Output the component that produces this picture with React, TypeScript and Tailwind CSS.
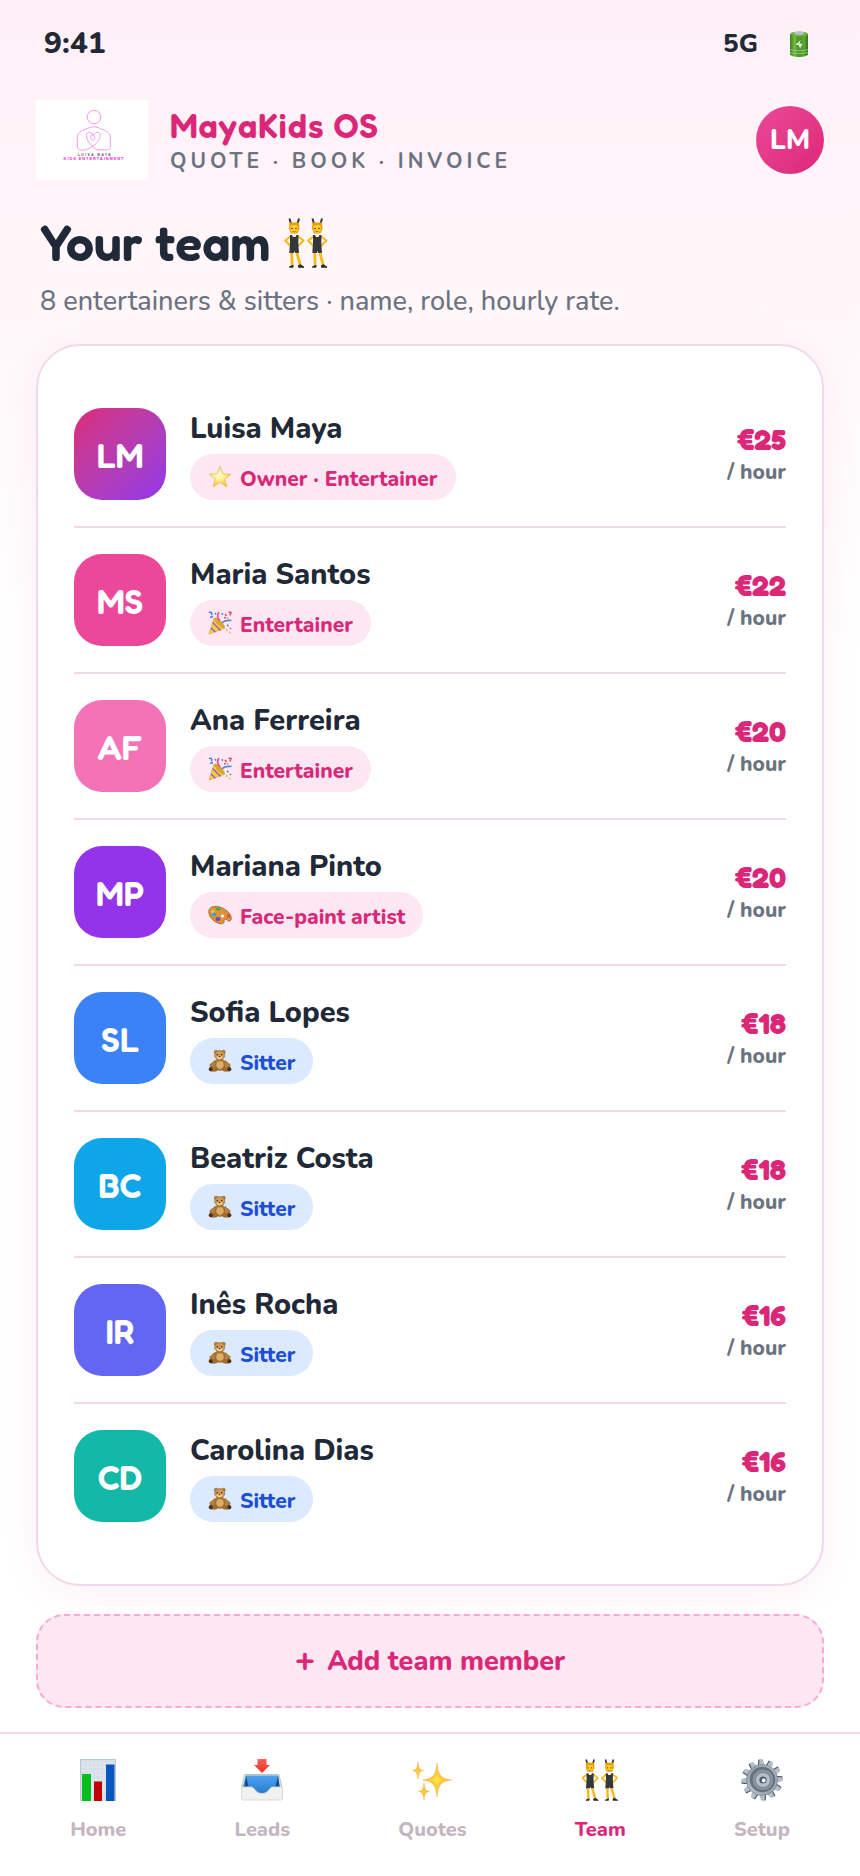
import type { ReactNode } from "react";

type IconProps = { className?: string };

function Battery({ className }: IconProps) {
  return (
    <svg viewBox="0 0 18 26" className={className} aria-hidden="true">
      <defs>
        <linearGradient id="bat" x1="0" x2="1">
          <stop offset="0" stopColor="#3f7d1c" />
          <stop offset=".25" stopColor="#74b844" />
          <stop offset=".45" stopColor="#4c9426" />
          <stop offset=".8" stopColor="#5aa52f" />
          <stop offset="1" stopColor="#35701a" />
        </linearGradient>
      </defs>
      <path d="M0 3v20c0 4 18 4 18 0V3z" fill="url(#bat)" />
      <ellipse cx="9" cy="3" rx="9" ry="2.6" fill="#6cb33f" />
      <ellipse cx="9" cy="2.2" rx="5" ry="1.6" fill="#b9c3cf" />
      <path d="M0 18.500c3 1.500 15 1.500 18 0M0 21.300c3 1.500 15 1.500 18 0" stroke="#a5cf8a" strokeWidth=".8" fill="none" />
      <path d="M10.500 9L5.500 14h3.200l1.300 3.500 2.600-4.700H9.500z" fill="#dcefd0" />
    </svg>
  );
}

function Dancer() {
  return (
    <g>
      <path d="M7 6L5.500.5M13.500 6L15 .5" stroke="#33373d" strokeWidth="2" fill="none" />
      <path d="M5.500 4.500h9.500l.5 6-2 5h-6.500l-2-5z" fill="#e79e00" />
      <path d="M6.300 8.500c2-2 6-2 7.700 0l-.5 4.500-3.300 3-3.400-3z" fill="#ffcf2e" />
      <circle cx="8" cy="10.500" r=".8" fill="#4a3510" />
      <circle cx="12" cy="10.500" r=".8" fill="#4a3510" />
      <path d="M8.500 13.200c1 .7 2 .7 3 0" stroke="#c4372d" strokeWidth=".9" fill="none" />
      <path d="M6.500 18.500L1.200 22.500l5.300 5.500M14 18.500l5.500 4L14 28" stroke="#f7b916" strokeWidth="2.100" fill="none" strokeLinejoin="round" />
      <path d="M6 17h2l1 2h2.500l1-2h2l-.2 8.500.7 9.500h-3.700l-.8-2-.7 2H5.300l.7-9.500z" fill="#34383d" />
      <path d="M7.700 35l.5 12.500M12.800 35l3.500 12" stroke="#f9b812" strokeWidth="2.800" fill="none" />
      <path d="M5.500 48.800l3.500-1.500v1.900H5.500zM14.500 47.500l2-.8 3.500 2.500h-5.500z" fill="#2e2a28" stroke="#2e2a28" />
    </g>
  );
}

function Dancers({ className }: IconProps) {
  return (
    <svg viewBox="0 0 44 50" className={className} aria-hidden="true">
      <Dancer />
      <g transform="translate(23 0)"><Dancer /></g>
    </svg>
  );
}

function Star({ className }: IconProps) {
  return (
    <svg viewBox="0 0 24 24" className={className} aria-hidden="true">
      <defs>
        <radialGradient id="star" cx=".45" cy=".4" r=".6">
          <stop offset="0" stopColor="#fffbe0" />
          <stop offset=".5" stopColor="#ffec85" />
          <stop offset="1" stopColor="#f7bd2f" />
        </radialGradient>
      </defs>
      <path d="M12 1.500l2.900 7.300 8 .4-6.200 4.900 2.200 7.700L12 17.400l-6.900 4.400 2.200-7.700L1.100 9.200l8-.4z" fill="url(#star)" stroke="#e9b54a" strokeWidth=".7" strokeLinejoin="round" />
    </svg>
  );
}

function Party({ className }: IconProps) {
  return (
    <svg viewBox="0 0 24 24" className={className} aria-hidden="true">
      <path d="M1 23L6 7l11 10z" fill="#f6cb45" stroke="#d59f32" strokeWidth=".6" />
      <path d="M4.600 11.500l8 8M3 17l4.500 4.300M7 7.500l9 9" stroke="#8a5cc4" strokeWidth="1.200" />
      <ellipse cx="11.500" cy="12" rx="2.400" ry="7" transform="rotate(-45 11.500 12)" fill="#dba52e" />
      <path d="M14 12c2-2.500 5-3 9.500-2.500" stroke="#4a86dd" strokeWidth="1.600" fill="none" />
      <path d="M12 10c-3-3-3-6-1-9" stroke="#e8538a" strokeWidth="1.700" fill="none" />
      <path d="M1 1.500c3-1 3.500 1.500 2 2.500M2 6.500l3-1" stroke="#4a78d8" strokeWidth="1.400" fill="none" />
      <path d="M17 3l1.500 2M20.500 1l2.500.5-1 3M16 7l2-.5" stroke="#dc4d7a" strokeWidth="1.600" fill="none" />
      <path d="M13.500 2.500l1.500 1M19 14l1.500 1M22 17l1 1M7 2l1 1.500" stroke="#5586e0" strokeWidth="1.600" />
      <path d="M18 18.500l1.500 1M21 21.500h1.500M19 7.500l1.500-1" stroke="#e6b23a" strokeWidth="1.600" />
    </svg>
  );
}

function Palette({ className }: IconProps) {
  return (
    <svg viewBox="0 0 24 24" className={className} aria-hidden="true">
      <path d="M.8 8.500c0-4.500 6-6.500 12.200-4 6 2.300 10.500 7 10.200 11-.3 3.300-3 3-4.200 1.300-1-1.500-3.500-1-3 1 .7 3-2.500 4-6.500 2C5 18 .8 13.500.8 8.500z" fill="#d9963c" stroke="#9b6222" strokeWidth=".9" />
      <ellipse cx="4.500" cy="8.500" rx="2" ry="1.500" fill="#e8c53a" />
      <ellipse cx="10" cy="6" rx="2.400" ry="1.500" fill="#38b445" />
      <ellipse cx="6" cy="11.500" rx="2.200" ry="1.700" fill="#31a6dc" />
      <ellipse cx="10" cy="16" rx="2.500" ry="1.900" fill="#8040b0" />
      <ellipse cx="16.500" cy="9" rx="2.200" ry="1.500" fill="#e8892c" />
      <ellipse cx="20.300" cy="13" rx="1.700" ry="2" fill="#e05252" />
      <circle cx="14.500" cy="13" r="1.500" fill="#fff" />
    </svg>
  );
}

function Bear({ className }: IconProps) {
  return (
    <svg viewBox="0 0 24 24" className={className} aria-hidden="true">
      <g stroke="#80521f" strokeWidth=".5">
        <circle cx="8" cy="3" r="1.800" fill="#b98038" />
        <circle cx="15.500" cy="3" r="1.800" fill="#b98038" />
        <ellipse cx="11.800" cy="15.500" rx="5.500" ry="6" fill="#b47a35" />
        <path d="M7 11.500L2 15.500c-1 2 1 3 2.500 2L8 15zM17 11.500l5 4c1 2-1 3-2.500 2L16 15z" fill="#b98038" />
        <ellipse cx="5.500" cy="20" rx="4.500" ry="2.300" fill="#a56d2c" />
        <ellipse cx="18.500" cy="20" rx="4.500" ry="2.300" fill="#a56d2c" />
        <ellipse cx="11.700" cy="6.300" rx="5.100" ry="4.700" fill="#d09a50" />
      </g>
      <ellipse cx="2.800" cy="20.300" rx="1.900" ry="2" fill="#4a2f18" />
      <ellipse cx="21.300" cy="20.300" rx="1.900" ry="2" fill="#4a2f18" />
      <ellipse cx="12" cy="16" rx="3.600" ry="3.800" fill="#dcae68" />
      <ellipse cx="11.500" cy="8.300" rx="2.600" ry="1.900" fill="#ecd0a0" />
      <ellipse cx="11.500" cy="7.500" rx="1" ry=".7" fill="#3a2412" />
      <circle cx="9.300" cy="5.700" r=".7" fill="#2c1a0c" />
      <circle cx="13.700" cy="5.700" r=".7" fill="#2c1a0c" />
    </svg>
  );
}

function Chart({ className }: IconProps) {
  return (
    <svg viewBox="0 0 36 42" className={className} aria-hidden="true">
      <rect width="36" height="42" fill="#d5dee8" />
      <path d="M0 4h36M0 8h36M0 12h36M0 16h36M0 20h36M0 24h36M0 28h36M0 32h36M0 36h36M4 0v42M8 0v42M12 0v42M16 0v42M20 0v42M24 0v42M28 0v42M32 0v42" stroke="#e2e9f1" strokeWidth=".8" />
      <path d="M.5 42V.5h35V42" stroke="#bcc8d6" fill="none" />
      <rect x="2" y="15" width="9" height="27" fill="#06bd19" />
      <rect x="14" y="22.500" width="8" height="19.500" fill="#bd0505" />
      <rect x="26" y="5.500" width="8.500" height="36.500" fill="#0757bf" />
    </svg>
  );
}

function Tray({ className }: IconProps) {
  return (
    <svg viewBox="0 0 42 42" className={className} aria-hidden="true">
      <defs>
        <linearGradient id="tray" x1="0" x2="0" y1="0" y2="1">
          <stop offset="0" stopColor="#4ba3f8" />
          <stop offset="1" stopColor="#2679c4" />
        </linearGradient>
        <linearGradient id="arrow" x1="0" x2="0" y1="0" y2="1">
          <stop offset="0" stopColor="#ff6154" />
          <stop offset="1" stopColor="#ea2f25" />
        </linearGradient>
      </defs>
      <path d="M3.500 15.500h34.500l3 13H.5z" fill="#dededa" stroke="#b9b9b4" strokeWidth=".8" />
      <path d="M5 16.500h32l2 12-9 7H11l-9-7z" fill="url(#tray)" />
      <path d="M5 16.500L3.500 27.500h4zM37 16.500l1.500 11h-4z" fill="#174f85" />
      <path d="M.5 28h10c3 0 4 6.500 10.500 6.500S28.500 28 31.500 28h10v11.500a1.500 1.500 0 0 1-1.500 1.500H2a1.500 1.500 0 0 1-1.500-1.500z" fill="#f1f1ee" stroke="#d4d4d0" strokeWidth=".8" />
      <path d="M16.500 0h9v6h3.500l-8 8-8-8h3.500z" fill="url(#arrow)" />
    </svg>
  );
}

function Sparkles({ className }: IconProps) {
  return (
    <svg viewBox="0 0 40 42" className={className} aria-hidden="true">
      <g fill="#fcc93a" stroke="#f0a94c" strokeWidth=".5">
        <path d="M25 4c1.200 12 3.500 15.500 14.500 17C28.500 22.500 26.200 26 25 38c-1.200-12-3.500-15.500-14.500-17C21.500 19.500 23.800 16 25 4z" />
        <path d="M6 3c.6 6 1.800 7.800 5.500 8.500C7.800 12.200 6.600 14 6 20c-.6-6-1.800-7.800-5.500-8.500C4.200 10.800 5.400 9 6 3z" />
        <path d="M12 24c.6 6 1.800 7.800 5.500 8.500-3.700.7-4.900 2.500-5.500 8.500-.6-6-1.800-7.800-5.500-8.500 3.700-.7 4.900-2.500 5.500-8.500z" />
      </g>
      <path d="M25 13c.5 5 2 7.500 7 8-5 .5-6.500 3-7 8-.5-5-2-7.500-7-8 5-.5 6.500-3 7-8z" fill="#ffdf45" />
    </svg>
  );
}

const TEETH = [0, 30, 60, 90, 120, 150, 180, 210, 240, 270, 300, 330];

function Gear({ className }: IconProps) {
  return (
    <svg viewBox="0 0 42 42" className={className} aria-hidden="true">
      <defs>
        <linearGradient id="gear" x1="0" x2="1" y1="0" y2="1">
          <stop offset="0" stopColor="#8d98a3" />
          <stop offset=".5" stopColor="#b3bcc5" />
          <stop offset="1" stopColor="#929ca7" />
        </linearGradient>
      </defs>
      {TEETH.map((a) => (
        <g key={a} transform={`rotate(${a - 3} 21 21)`}>
          <path d="M17.500 8l.8-7.500h3L24 8z" fill="#4e565f" />
          <path d="M18.500 8l1-7.500h3.600L25 8z" fill="#b4bec8" />
        </g>
      ))}
      <circle cx="21" cy="21" r="15.500" fill="url(#gear)" stroke="#707b87" strokeWidth=".6" />
      <circle cx="21.500" cy="20.500" r="12.800" fill="#6b7580" />
      <circle cx="22" cy="20.800" r="11" fill="#89939e" stroke="#59626c" strokeWidth=".8" />
      <circle cx="22" cy="21" r="7.500" fill="#b4bfcc" stroke="#727d89" strokeWidth=".8" />
      <circle cx="22" cy="21" r="3.600" fill="#505861" />
      <circle cx="22.700" cy="21.500" r="1.900" fill="#fff" />
    </svg>
  );
}

function Logo() {
  return (
    <svg viewBox="0 0 112 80" className="h-20 w-28 shrink-0 bg-white" role="img" aria-label="Luisa Maya Kids Entertainment">
      <g fill="none" stroke="#f27fe0" strokeWidth=".8">
        <circle cx="58" cy="17" r="6.800" />
        <path d="M61 50c6-1 10 1 12.500-1 1.500-1.500.8-6 .8-12 0-5-6-6.500-10-8.500-4-2.200-9-2-13 0-4 1.800-9.500 3-10 7.500v10c0 5 6 4.500 9 3.500 5-1.700 14-7.500 14-14 0-4.500-5.500-4-6.800 0-1.200-4-7-4.500-7 0 0 6.500 7 12 10.500 14.500z" />
        <path d="M57.500 35.500c-2-2-3.500 0-2.500 3 .8 2.700 3.500 2.500 3.700 0 .2-2 0-3-1.200-3z" />
      </g>
      <text x="59" y="55.500" textAnchor="middle" fontSize="3.200" letterSpacing="1.500" fill="#555" className="font-['Liberation_Sans',sans-serif] font-bold">LUISA MAYA</text>
      <text x="58" y="60" textAnchor="middle" fontSize="4" letterSpacing=".9" fill="#f01fd0" className="font-['Liberation_Sans',sans-serif] font-bold">KIDS ENTERTAINMENT</text>
    </svg>
  );
}

type Member = { initials: string; name: string; role: string; rate: number; tile: string; icon: ReactNode; sitter?: boolean };

const roleIcon = "size-6 shrink-0";
const TEAM: Member[] = [
  { initials: "LM", name: "Luisa Maya", role: "Owner · Entertainer", rate: 25, tile: "bg-linear-135 from-[#db2777] to-[#9333ea]", icon: <Star className={roleIcon} /> },
  { initials: "MS", name: "Maria Santos", role: "Entertainer", rate: 22, tile: "bg-[#ec4899]", icon: <Party className={roleIcon} /> },
  { initials: "AF", name: "Ana Ferreira", role: "Entertainer", rate: 20, tile: "bg-[#f472b6]", icon: <Party className={roleIcon} /> },
  { initials: "MP", name: "Mariana Pinto", role: "Face-paint artist", rate: 20, tile: "bg-[#9333ea]", icon: <Palette className={roleIcon} /> },
  { initials: "SL", name: "Sofia Lopes", role: "Sitter", rate: 18, tile: "bg-[#3b82f6]", icon: <Bear className={roleIcon} />, sitter: true },
  { initials: "BC", name: "Beatriz Costa", role: "Sitter", rate: 18, tile: "bg-[#0ea5e9]", icon: <Bear className={roleIcon} />, sitter: true },
  { initials: "IR", name: "Inês Rocha", role: "Sitter", rate: 16, tile: "bg-[#6366f1]", icon: <Bear className={roleIcon} />, sitter: true },
  { initials: "CD", name: "Carolina Dias", role: "Sitter", rate: 16, tile: "bg-[#14b8a6]", icon: <Bear className={roleIcon} />, sitter: true },
];

const TABS: { label: string; icon: ReactNode; active?: boolean }[] = [
  { label: "Home", icon: <Chart className="h-[42px] w-9" /> },
  { label: "Leads", icon: <Tray className="size-[42px]" /> },
  { label: "Quotes", icon: <Sparkles className="h-[42px] w-10" /> },
  { label: "Team", icon: <Dancers className="h-[42px] w-[38px]" />, active: true },
  { label: "Setup", icon: <Gear className="size-[42px]" /> },
];

function MemberRow({ m }: { m: Member }) {
  return (
    <li className="flex items-center gap-6 border-b-2 border-[#f3d9e8] py-[26px] last:border-b-0">
      <div className={`flex size-[92px] shrink-0 items-center justify-center rounded-[28px] pt-0.5 font-['Fredoka','Nunito','Open_Sans',sans-serif] text-[34px] font-semibold text-white ${m.tile}`}>
        {m.initials}
      </div>
      <div className="flex min-w-0 flex-1 flex-col items-start gap-1">
        <h2 className="text-[29px] leading-[42px] font-extrabold text-[#1f2937]">{m.name}</h2>
        <span className={`flex h-[46px] items-center gap-2 rounded-full px-[18px] text-[21px] font-extrabold ${m.sitter ? "bg-[#dbeafe] text-[#1d4ed8]" : "bg-[#fce7f3] text-[#db2777]"}`}>
          {m.icon}
          <span className="pt-1.5">{m.role}</span>
        </span>
      </div>
      <p className="pt-0.5 text-right">
        <span className="block font-['Fredoka','Nunito','Open_Sans',sans-serif] text-[30px] leading-[34px] font-black text-[#db2777]">€{m.rate}</span>
        <span className="block text-[21px] leading-8 font-extrabold text-[#6b7280]">/ hour</span>
      </p>
    </li>
  );
}

export default function App() {
  return (
    <div className="flex min-h-screen flex-col bg-linear-to-b from-[#fff0f7] to-white to-35% font-['Nunito','Open_Sans',sans-serif] text-[#1f2937]">
      <div className="flex items-center justify-between px-11 pt-7 pb-10 leading-8 font-extrabold">
        <span className="text-[30px]">9:41</span>
        <span className="flex items-center gap-8 pr-2 text-[26px]">
          5G
          <Battery className="h-[26px] w-[18px]" />
        </span>
      </div>

      <header className="flex items-center gap-[22px] px-9">
        <Logo />
        <div className="min-w-0 flex-1 pt-1">
          <p className="font-['Fredoka','Nunito','Open_Sans',sans-serif] text-[34px] leading-[38px] font-semibold tracking-[1px] text-[#db2777]">MayaKids OS</p>
          <p className="text-[21px] leading-8 font-bold tracking-[4px] text-[#6b7280]">QUOTE · BOOK · INVOICE</p>
        </div>
        <button type="button" aria-label="Account" className="size-[68px] rounded-full bg-linear-135 from-[#ec4899] to-[#db2777] text-[28px] font-extrabold text-white">LM</button>
      </header>

      <main className="flex flex-1 flex-col px-9 pb-6">
        <div className="px-1 pt-[34px]">
          <h1 className="flex items-center gap-3.5 font-['Fredoka','Nunito','Open_Sans',sans-serif] text-[50px] leading-[58px] font-semibold">
            Your team
            <Dancers className="h-[50px] w-11" />
          </h1>
          <p className="mt-3 text-[27px] leading-9 font-medium text-[#6b7280]">8 entertainers &amp; sitters · name, role, hourly rate.</p>
        </div>

        <ul className="mt-6 rounded-[44px] border-2 border-[#f3d9e8] bg-white p-9 shadow-[0_8px_40px_rgba(219,39,119,0.06)]">
          {TEAM.map((m) => <MemberRow key={m.name} m={m} />)}
        </ul>

        <button type="button" className="mt-7 flex h-[94px] items-center justify-center gap-3 rounded-[28px] border-2 border-dashed border-[#f9a8d4] bg-[#fce7f3] pt-0.5 text-[27px] font-extrabold text-[#db2777]">
          <span className="pb-1 text-[34px] leading-8">+</span>
          Add team member
        </button>
      </main>

      <nav className="flex h-36 items-start justify-around border-t-2 border-[#f3d9e8] bg-white px-4 pt-[25px]">
        {TABS.map((t) => (
          <a key={t.label} href="#" aria-current={t.active ? "page" : undefined} className={`flex flex-col items-center gap-3.5 text-[20px] leading-[30px] font-extrabold ${t.active ? "text-[#db2777]" : "text-[#c4b5c0]"}`}>
            {t.icon}
            {t.label}
          </a>
        ))}
      </nav>
    </div>
  );
}
